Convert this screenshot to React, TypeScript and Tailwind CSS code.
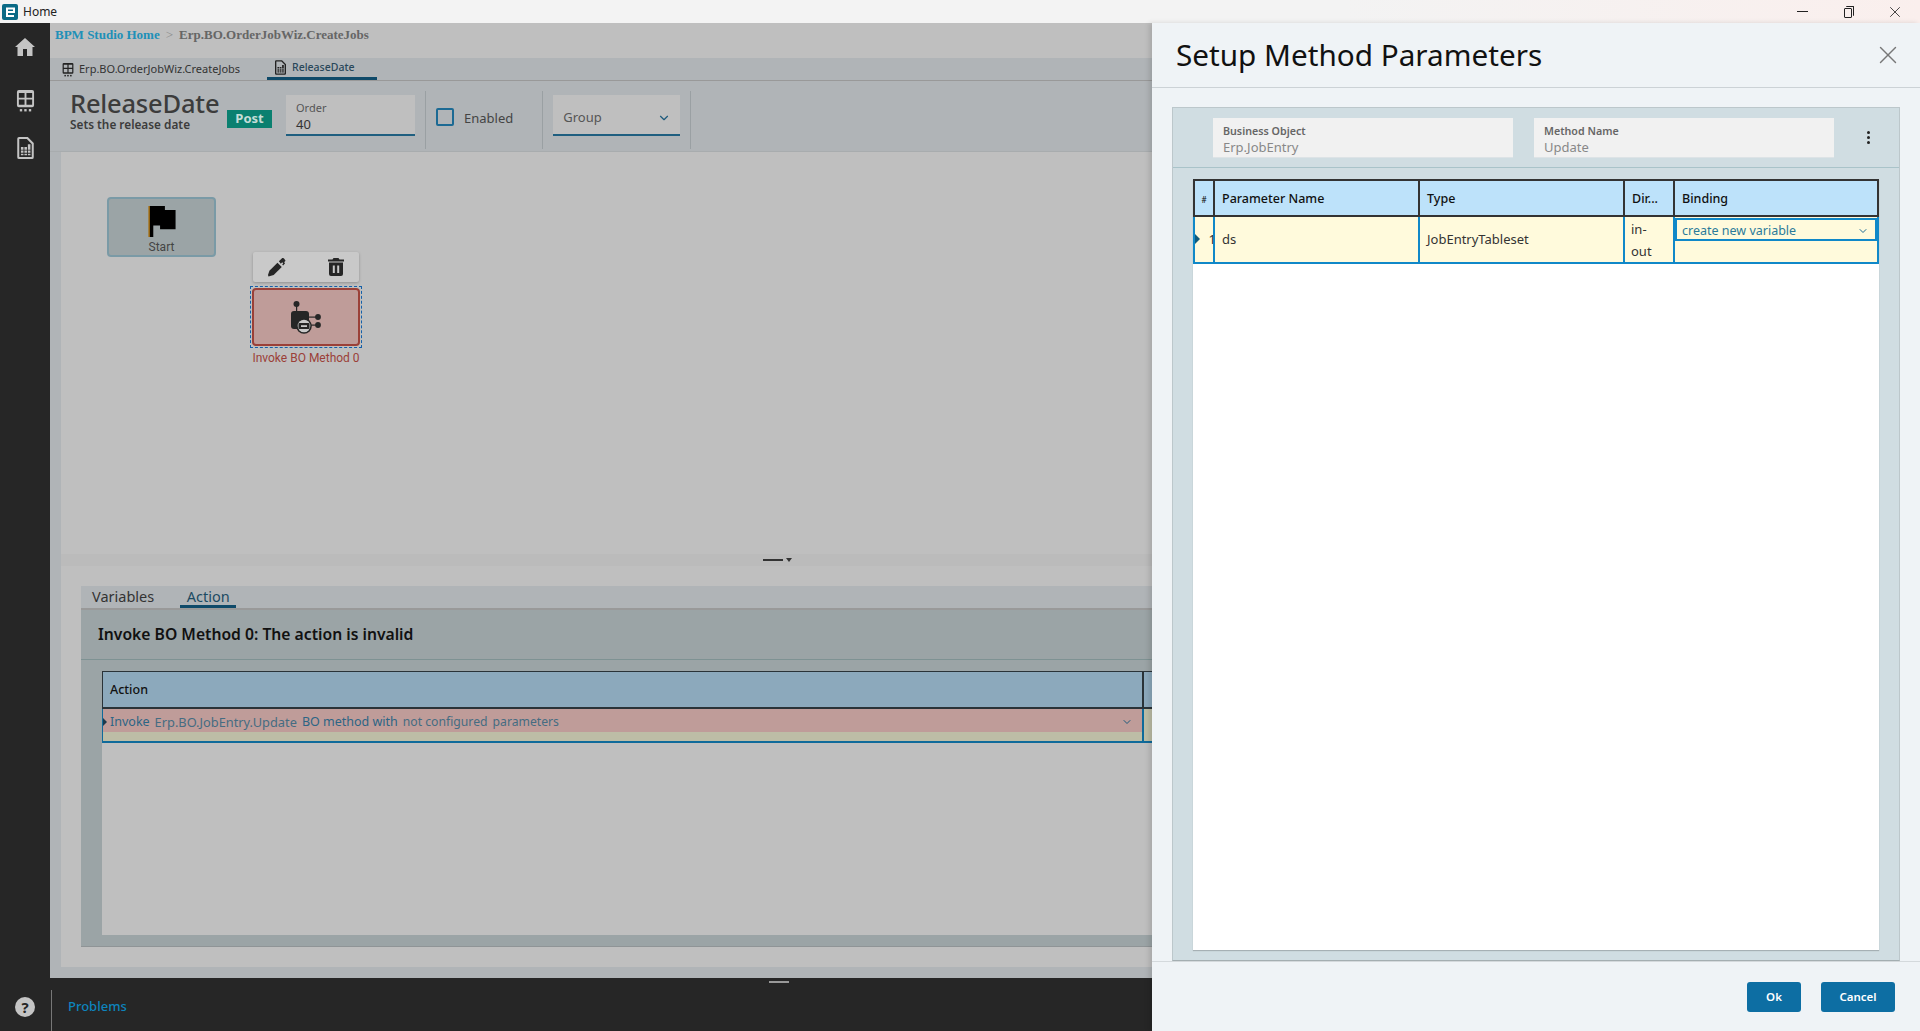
import { ChevronDown, X } from "lucide-react";

const columns = [
  { name: "#", width: "w-[18px]", center: true },
  { name: "Parameter Name", width: "w-[205px]" },
  { name: "Type", width: "w-[205px]" },
  { name: "Dir...", width: "w-[50px]" },
  { name: "Binding", width: "flex-1" },
];

function HomeIcon() {
  return (
    <svg viewBox="0 0 24 24" className="w-[24px] h-[24px] fill-[#c4c4c4]">
      <path d="M10 21v-7h4v7h5.500v-9H22L12 3 2 12h2.500v9z" />
    </svg>
  );
}

function GridIcon({ className, fill }: { className: string; fill: string }) {
  return (
    <svg viewBox="0 0 20 24" className={className} fill={fill}>
      <path d="M3 1h14a2 2 0 0 1 2 2v14a2 2 0 0 1-2 2H3a2 2 0 0 1-2-2V3a2 2 0 0 1 2-2zm0 3v5h6V4zm8 0v5h6V4zM3 11v5.500h6V11zm8 0v5.500h6V11z" fillRule="evenodd" />
      <rect x="4" y="21" width="2.500" height="2.500" />
      <rect x="8.700" y="21" width="2.500" height="2.500" />
      <rect x="13.500" y="21" width="2.500" height="2.500" />
    </svg>
  );
}

function DocIcon({ className, fill }: { className: string; fill: string }) {
  return (
    <svg viewBox="0 0 18 24" className={className} fill={fill}>
      <path d="M2 0h9.500L18 6.500V22a2 2 0 0 1-2 2H2a2 2 0 0 1-2-2V2a2 2 0 0 1 2-2zm.200 2.200v19.600h13.600V7.500L10.500 2.200z" fillRule="evenodd" />
      <path d="M4 11h2.800v2.800H4zm3.800 0h2.800v2.800H7.800zm3.800-3h2.800v5.800h-2.800zM4 14.800h2.800v2.400H4zm3.800 0h2.800v2.400H7.800zm3.800 0h2.800v2.400h-2.800zM4 18.200h2.800V20H4zm3.800 0h2.800V20H7.800zm3.800 0h2.800V20h-2.800z" />
    </svg>
  );
}

function BoMethodIcon() {
  return (
    <svg viewBox="0 0 30 33" className="w-[30px] h-[33px]" fill="#262626">
      <circle cx="5.500" cy="3" r="3" />
      <rect x="5" y="5" width="1.200" height="6" />
      <rect x="0" y="10" width="18" height="18" rx="3" />
      <circle cx="13" cy="25" r="7.800" />
      <circle cx="13" cy="25" r="6.300" fill="#c9c9c9" />
      <rect x="7.500" y="22" width="11" height="6" rx="1" />
      <rect x="10" y="24.200" width="6" height="1.800" fill="#c9c9c9" />
      <rect x="18" y="15.500" width="7" height="1.200" />
      <rect x="20" y="23.500" width="5" height="1.200" />
      <circle cx="27" cy="16" r="2.900" />
      <circle cx="27" cy="24" r="2.900" />
    </svg>
  );
}

export default function App() {
  return (
    <div className="relative w-[1920px] h-[1031px] overflow-hidden font-['Noto_Sans',sans-serif] bg-[#bfbfbf]">
      {/* window title bar */}
      <div className="h-[23px] flex items-center bg-[linear-gradient(90deg,#f3f3f3_70%,#faefed_100%)]">
        <div className="ml-[2px] w-[16px] h-[16px] rounded-[2px] bg-[#0a6a86] flex items-center justify-center">
          <svg viewBox="0 0 12 12" className="w-[12px] h-[12px]" fill="none" stroke="#fff" strokeWidth="2">
            <path d="M10 10H3V2.500h7V6H3" />
          </svg>
        </div>
        <span className="ml-[5px] text-[12px] text-[#222]">Home</span>
        <div className="ml-auto flex items-center text-[#222]">
          <div className="w-[11px] h-[1px] bg-[#222] mr-[36px]" />
          <div className="relative w-[10px] h-[12px] mr-[32px]">
            <div className="absolute left-[0px] top-[2px] w-[8px] h-[10px] border border-[#222] rounded-[1px]" />
            <div className="absolute left-[2px] top-[0px] w-[8px] h-[10px] border-t border-r border-[#222] rounded-[1px]" />
          </div>
          <X className="w-[18px] h-[18px] mr-[16px]" strokeWidth={1.100} />
        </div>
      </div>

      <div className="flex h-[1008px]">
        {/* left rail */}
        <div className="w-[50px] bg-[#262626] flex flex-col items-center pt-[12px]">
          <HomeIcon />
          <div className="mt-[30px]">
            <GridIcon className="w-[19px] h-[23px]" fill="#c4c4c4" />
          </div>
          <div className="mt-[25px]">
            <DocIcon className="w-[17px] h-[22px]" fill="#c4c4c4" />
          </div>
          <div className="mt-auto mb-[14px] w-[20px] h-[20px] rounded-full bg-[#c4c4c4] flex items-center justify-center text-[#262626] text-[15px] font-bold">
            ?
          </div>
        </div>

        <div className="flex-1 min-w-0 flex flex-col">
          {/* breadcrumb */}
          <div className="h-[35px] pl-[5px] pt-[4px] flex items-start gap-[6px] font-['Liberation_Serif',serif] font-bold text-[13px] leading-[16px] bg-[#bfbfbf]">
            <span className="text-[#2090b8]">BPM Studio Home</span>
            <span className="text-[#8c8c8c] font-normal">&gt;</span>
            <span className="text-[#666]">Erp.BO.OrderJobWiz.CreateJobs</span>
          </div>

          {/* document tabs */}
          <div className="h-[23px] flex bg-[#b0b4b7] border-b border-[#999] text-[11px] text-[#333]">
            <div className="ml-[12px] flex items-center gap-[5px]">
              <GridIcon className="w-[12px] h-[15px]" fill="#222" />
              <span>Erp.BO.OrderJobWiz.CreateJobs</span>
            </div>
            <div className="ml-[27px] w-[110px] pl-[8px] flex items-center gap-[6px] border-b-[3px] border-[#0f4a69] text-[10.500px] font-medium text-[#28475a]">
              <DocIcon className="w-[11px] h-[15px]" fill="#222" />
              <span>ReleaseDate</span>
            </div>
          </div>

          {/* step toolbar */}
          <div className="h-[71px] flex bg-[#b0b4b7] pt-[10px] border-b border-[#a8acae]">
            <div className="ml-[20px] -mt-[1px] w-[157px] text-[#3c3c3c]">
              <div className="text-[25.500px] leading-[26px] font-medium tracking-[-0.2px]">ReleaseDate</div>
              <div className="mt-[1px] text-[11.800px] leading-[15px] font-semibold">Sets the release date</div>
            </div>
            <div className="mt-[19px] w-[45px] h-[18px] bg-[#0a8070] text-[#c5ddd7] text-[13px] font-bold flex items-center justify-center">
              Post
            </div>
            <div className="ml-[14px] mt-[4px] w-[129px] h-[41px] bg-[#bfbfbf] border-b-2 border-[#1f5f80] pl-[10px] pt-[5px] text-[#333]">
              <div className="text-[11px] leading-[15px] text-[#555]">Order</div>
              <div className="mt-[1px] text-[13px] leading-[17px]">40</div>
            </div>
            <div className="ml-[10px] h-[58px] w-[1px] bg-[#9aa0a3]" />
            <div className="ml-[10px] mt-[17px] w-[18px] h-[18px] border-2 border-[#1c6a94] rounded-[2px]" />
            <span className="ml-[10px] mt-[18px] text-[13px] text-[#444]">Enabled</span>
            <div className="ml-[29px] h-[58px] w-[1px] bg-[#9aa0a3]" />
            <div className="ml-[10px] mt-[4px] w-[127px] h-[41px] bg-[#bfbfbf] border-b-2 border-[#1f5f80] pl-[10px] pr-[9px] pt-[6px] flex items-center justify-between text-[13px] text-[#555]">
              Group
              <ChevronDown className="w-[14px] h-[14px] text-[#1c5a7c]" />
            </div>
            <div className="ml-[10px] h-[58px] w-[1px] bg-[#9aa0a3]" />
          </div>

          {/* workspace */}
          <div className="flex-1 min-h-0 flex flex-col pl-[11px] pb-[11px] bg-[#b0b4b7]">
            <div className="flex-1 min-h-0 flex flex-col bg-[#bfbfbf]">
              {/* canvas */}
              <div className="relative h-[402px] shrink-0">
                <div className="absolute left-[46px] top-[45px] w-[109px] h-[60px] rounded-[4px] border-2 border-[#7a9aa6] bg-[#9ba4a6] flex flex-col items-center">
                  <svg viewBox="0 0 28 32" className="mt-[7px] w-[28px] h-[31px]">
                    <path d="M0 0h1.500v32H0z" fill="#a86a00" />
                    <path d="M1.500 0H17v4h11v20H12v-4H5v12H1.500z" fill="#000" />
                  </svg>
                  <span className="mt-[2px] font-['Roboto',sans-serif] text-[12px] leading-[16px] text-[#444]">Start</span>
                </div>

                <div className="absolute left-[192px] top-[100px] w-[106px] h-[30px] rounded-[2px] bg-[#c9c9c9] shadow-[0_1px_3px_rgba(0,0,0,0.25)] flex items-center justify-between pl-[14px] pr-[15px]">
                  <svg viewBox="0 0 20 20" className="w-[20px] h-[19px] fill-[#262626]">
                    <path d="M1 19.500L0.500 18 2 13.500l8.500-8.500 4.500 4.500L6.500 18z" />
                    <path d="M12 3.500L15 .5c1-.8 2.200-.5 2.800.5l1.200 2-1.500 1.500 1 1-2 2.500-1-1 1-1.500-1-1-1.500 1.500z" />
                  </svg>
                  <svg viewBox="0 0 16 18" className="w-[16px] h-[18px]" fill="#262626">
                    <path fillRule="evenodd" d="M5.500 0h5l1 1.500H16v2H0v-2h4.500zM1 4.500h14V16a2 2 0 0 1-2 2H3a2 2 0 0 1-2-2zm3.800 3v7.500h2V7.500zm4.400 0v7.500h2V7.500z" />
                  </svg>
                </div>

                <div className="absolute left-[189px] top-[134px] w-[112px] h-[62px] border border-dashed border-[#1560a8] p-[1px]">
                  <div className="w-full h-full rounded-[4px] border-2 border-[#9b4038] bg-[#bf9c99] flex items-center justify-center">
                    <BoMethodIcon />
                  </div>
                </div>
                <div className="absolute left-[179px] top-[198px] w-[132px] text-center font-['Roboto',sans-serif] text-[12px] leading-[16px] text-[#9b4038]">
                  Invoke BO Method 0
                </div>
              </div>

              {/* splitter */}
              <div className="h-[12px] shrink-0 bg-[#bbbbbb] flex items-center pl-[702px]">
                <div className="w-[20px] h-[2px] bg-[#333]" />
                <div className="ml-[3px] w-0 h-0 border-l-[3px] border-r-[3px] border-t-[4px] border-l-transparent border-r-transparent border-t-[#333]" />
              </div>

              {/* bottom pane */}
              <div className="flex-1 min-h-0 p-[20px] flex flex-col">
                <div className="h-full flex flex-col bg-[#9ba4a6] border-b border-[#8f9496]">
                  <div className="h-[24px] shrink-0 bg-[#b0b4b7] border-b-2 border-[#999] flex text-[14.500px] leading-[20px]">
                    <span className="ml-[11px] text-[#333]">Variables</span>
                    <span className="ml-[26px] w-[56px] h-[22px] text-center border-b-[3px] border-[#0f4a69] text-[#1c4a62]">Action</span>
                  </div>
                  <div className="h-[50px] shrink-0 pl-[17px] pt-[1px] flex items-center border-b border-[#7e9293] text-[15.700px] font-semibold text-[#111]">
                    Invoke BO Method 0: The action is invalid
                  </div>
                  <div className="flex-1 min-h-0 ml-[21px] mt-[11px] mb-[11px] flex flex-col bg-[#bfbfbf]">
                    <div className="h-[38px] flex bg-[#8ca9bc] border-t border-b-2 border-l border-[#2a3338]">
                      <div className="w-[1041px] border-r-2 border-[#2a3338] pl-[7px] pt-[2px] flex items-center text-[12.500px] font-medium text-[#111]">
                        Action
                      </div>
                    </div>
                    <div className="h-[34px] flex border-b-2 border-l border-[#0f6a9a] bg-[#bdbda6]">
                      <div className="w-[1041px] border-r-2 border-[#0f6a9a] flex flex-col">
                        <div className="relative h-[23px] bg-[#bf9c99] pl-[7px] pt-[4px] flex items-center gap-[5px] text-[12.500px] text-[#2c6585]">
                          <div className="absolute left-[0px] top-[9px] w-0 h-0 border-t-[4px] border-b-[4px] border-l-[4px] border-t-transparent border-b-transparent border-l-[#1c3a4c]" />
                          <span>Invoke</span>
                          <span className="text-[12.800px] text-[#456c82]">Erp.BO.JobEntry.Update</span>
                          <span>BO method with</span>
                          <span className="text-[12.200px] text-[#456c82]">not configured</span>
                          <span className="text-[12.200px] text-[#456c82]">parameters</span>
                          <ChevronDown className="absolute right-[9px] top-[7px] w-[12px] h-[12px] text-[#1c5a7c]" />
                        </div>
                      </div>
                    </div>
                  </div>
                </div>
              </div>
            </div>
          </div>

          {/* problems bar */}
          <div className="relative h-[53px] shrink-0 bg-[#262626] flex">
            <div className="absolute left-[719px] top-[3px] w-[20px] h-[2px] bg-[#999]" />
            <div className="ml-[1px] mt-[12px] w-[1px] bg-[#777]" />
            <span className="ml-[16px] mt-[19px] text-[13px] leading-[18px] font-medium text-[#0d84bd]">Problems</span>
          </div>
        </div>
      </div>

      {/* setup method parameters slide-over */}
      <div className="absolute left-[1152px] top-[23px] w-[768px] h-[1008px] flex flex-col bg-[#eff3f6] shadow-[-3px_0_5px_rgba(0,0,0,0.12)]">
        <div className="h-[65px] shrink-0 border-b border-[#ccd2d6] flex items-center pl-[24px] pr-[17px]">
          <h1 className="text-[29.700px] text-[#111]">Setup Method Parameters</h1>
          <X className="ml-auto w-[30px] h-[30px] text-[#777]" strokeWidth={1.100} />
        </div>

        <div className="flex-1 min-h-0 px-[20px] pt-[19px] pb-0">
          <div className="h-full flex flex-col bg-[#d0dde2] border border-[#bcc7cb] border-b-[#a4aeb1]">
            <div className="h-[60px] shrink-0 border-b border-[#a9c3c9] flex items-center pl-[40px]">
              <div className="w-[300px] h-[40px] bg-[#f1f1f1] border-b border-[#dde3e6] pl-[10px] pt-[6px]">
                <div className="text-[10.700px] leading-[15px] font-semibold text-[#666]">Business Object</div>
                <div className="text-[13px] leading-[16px] text-[#888]">Erp.JobEntry</div>
              </div>
              <div className="ml-[21px] w-[300px] h-[40px] bg-[#f1f1f1] border-b border-[#dde3e6] pl-[10px] pt-[6px]">
                <div className="text-[10.700px] leading-[15px] font-semibold text-[#666]">Method Name</div>
                <div className="text-[13px] leading-[16px] text-[#888]">Update</div>
              </div>
              <div className="ml-[33px] flex flex-col gap-[2px]">
                <div className="w-[3px] h-[3px] rounded-full bg-[#222]" />
                <div className="w-[3px] h-[3px] rounded-full bg-[#222]" />
                <div className="w-[3px] h-[3px] rounded-full bg-[#222]" />
              </div>
            </div>

            <div className="flex-1 min-h-0 mx-[20px] mt-[11px] mb-[10px] flex flex-col bg-white shadow-[0_1px_1px_rgba(0,0,0,0.2)]">
              <div className="h-[38px] shrink-0 flex bg-[#bde2fa] border-2 border-[#333] text-[12.500px] font-medium text-[#111]">
                {columns.map((col, i) => (
                  <div
                    key={col.name}
                    className={`${col.width} flex items-center pt-[3px] ${i > 0 ? "border-l-2 border-[#333]" : ""} ${
                      col.center ? "justify-center text-[8px]" : "pl-[7px]"
                    }`}
                  >
                    {col.name}
                  </div>
                ))}
              </div>

              <div className="h-[47px] shrink-0 flex bg-[#fffadc] border-2 border-t-0 border-[#1088c8] text-[13px] text-[#333]">
                <div className="relative w-[18px] flex items-center justify-end overflow-hidden">
                  <div className="absolute left-0 top-[17px] w-0 h-0 border-t-[5px] border-b-[5px] border-l-[5px] border-t-transparent border-b-transparent border-l-[#0f5a7c]" />
                  <span className="mr-[-3px]">1</span>
                </div>
                <div className="w-[205px] border-l-2 border-[#1088c8] pl-[7px] pt-[1px] flex items-center">ds</div>
                <div className="w-[205px] border-l-2 border-[#1088c8] pl-[7px] pt-[1px] flex items-center">JobEntryTableset</div>
                <div className="w-[50px] border-l-2 border-[#1088c8] pl-[6px] leading-[22px] flex items-center">in-<br />out</div>
                <div className="flex-1 border-l-2 border-[#1088c8]">
                  <div className="h-[23px] mt-[1px] border-2 border-[#1088c8] pl-[5px] pr-[6px] pt-[3px] flex items-center justify-between text-[12.500px] text-[#2b7a9a]">
                    create new variable
                    <ChevronDown className="w-[12px] h-[12px] text-[#1c6a94]" />
                  </div>
                </div>
              </div>
            </div>
          </div>
        </div>

        <div className="h-[70px] shrink-0 flex items-start justify-end gap-[20px] pt-[20px] pr-[25px] border-t border-[#d4d9dc] text-[11.500px] font-semibold text-white">
          <button className="w-[54px] h-[30px] rounded-[3px] bg-[#0d6ea3]">Ok</button>
          <button className="w-[74px] h-[30px] rounded-[3px] bg-[#0d6ea3]">Cancel</button>
        </div>
      </div>
    </div>
  );
}
